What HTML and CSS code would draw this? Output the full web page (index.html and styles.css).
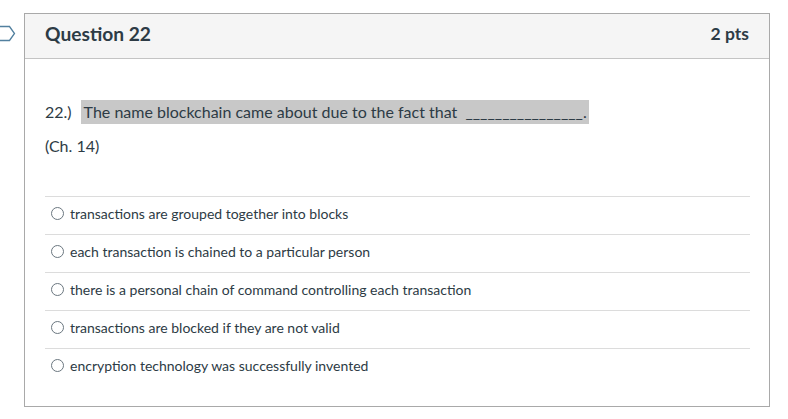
FILE: index.html
```html
<!DOCTYPE html>
<html>
<head>
<meta charset="utf-8">
<link rel="stylesheet" href="styles.css">
</head>
<body>
<div class="page">
  <svg class="flag" width="16" height="17" viewBox="0 0 16 17">
    <path d="M-2 1.5 H9.5 L14.5 8.5 L9.5 15.5 H-2" fill="none" stroke="#52809f" stroke-width="1.3"/>
  </svg>
  <div class="card">
    <div class="header">
      <span class="title">Question 22</span>
      <span class="pts">2 pts</span>
    </div>
    <div class="body">
      <p class="question">22.)<span class="hl">The name blockchain came about due to the fact that &nbsp;________________.</span></p>
      <p class="chapter">(Ch. 14)</p>
      <div class="answers">
        <label class="answer"><span class="radio"></span>transactions are grouped together into blocks</label>
        <label class="answer"><span class="radio"></span>each transaction is chained to a particular person</label>
        <label class="answer"><span class="radio"></span>there is a personal chain of command controlling each transaction</label>
        <label class="answer"><span class="radio"></span>transactions are blocked if they are not valid</label>
        <label class="answer"><span class="radio"></span>encryption technology was successfully invented</label>
      </div>
    </div>
  </div>
</div>
</body>
</html>
```
FILE: styles.css
```css
html, body { margin: 0; padding: 0; background: #fff; }
body { font-family: Lato, "Noto Sans", sans-serif; color: #2d3b45; }
.page { display: flex; align-items: flex-start; padding-top: 13px; }
.flag { margin-top: 12px; margin-right: 8px; display: block; }
.card { width: 744px; border: 1px solid #a9a9a9; }
.header {
  box-sizing: border-box; background: #f5f5f5; border-bottom: 1px solid #c4c4c4;
  display: flex; align-items: center; justify-content: space-between;
  padding: 0 20px 5px 20px;
  height: 45px;
}
.title { font-size: 19.2px; font-weight: 700; color: #2d3b45; }
.pts { font-size: 17.5px; font-weight: 700; color: #2d3b45; }
.body { padding: 41px 19px 20px 20px; }
.question { margin: 0; font-size: 16px; line-height: 24px; }
.hl { display: inline-block; background: #c8c8c8; padding: 0 2px 0 3px; margin-left: 9px; line-height: 24px; }
.chapter { margin: 10px 0 0; font-size: 16px; line-height: 24px; color: #2d3b45; }
.answers { margin-top: 38px; }
.answer {
  display: flex; align-items: center; box-sizing: border-box; border-top: 1px solid #dcdcdc;
  padding-bottom: 4px; height: 38px;
  font-size: 14px; color: #2d3b45;
}
.radio {
  width: 11px; height: 11px; border: 1px solid #6b7780; border-radius: 50%;
  margin: 0 6px 0 6px; box-sizing: content-box; flex: none;
}
```
